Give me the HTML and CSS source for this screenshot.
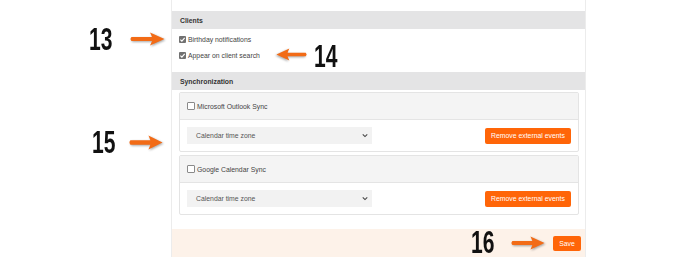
FILE: index.html
```html
<!DOCTYPE html>
<html>
<head>
<meta charset="utf-8">
<link rel="stylesheet" href="styles.css">
</head>
<body>
<div class="page">
  <div class="panel">
    <div class="section-head">Clients</div>
    <div class="options">
      <label class="opt"><span class="cb checked"><svg viewBox="0 0 8 8" width="7" height="7"><path d="M1.6 4.1 L3.3 5.8 L6.5 2.2" fill="none" stroke="#fff" stroke-width="1.3"/></svg></span>Birthday notifications</label>
      <label class="opt"><span class="cb checked"><svg viewBox="0 0 8 8" width="7" height="7"><path d="M1.6 4.1 L3.3 5.8 L6.5 2.2" fill="none" stroke="#fff" stroke-width="1.3"/></svg></span>Appear on client search</label>
    </div>
    <div class="section-head">Synchronization</div>
    <div class="cards">
      <div class="card">
        <div class="card-head"><span class="cb"></span>Microsoft Outlook Sync</div>
        <div class="card-body">
          <div class="select">Calendar time zone<svg class="chev" viewBox="0 0 8 6" width="6" height="5"><path d="M1 1.5 L4 4.5 L7 1.5" fill="none" stroke="#444" stroke-width="1.4"/></svg></div>
          <div class="btn">Remove external events</div>
        </div>
      </div>
      <div class="card">
        <div class="card-head"><span class="cb"></span>Google Calendar Sync</div>
        <div class="card-body">
          <div class="select">Calendar time zone<svg class="chev" viewBox="0 0 8 6" width="6" height="5"><path d="M1 1.5 L4 4.5 L7 1.5" fill="none" stroke="#444" stroke-width="1.4"/></svg></div>
          <div class="btn">Remove external events</div>
        </div>
      </div>
    </div>
    <div class="footer"><div class="btn save">Save</div></div>
  </div>

  <div class="num n13">13</div>
  <div class="num n14">14</div>
  <div class="num n15">15</div>
  <div class="num n16">16</div>

  <svg class="arrow a13" viewBox="0 0 36 14" preserveAspectRatio="none"><path d="M2.5 5 H23 Q22 2.5 21 0.5 L35.5 7 L21 13.5 Q22 11.5 23 9 H2.5 Q0.5 7 2.5 5 Z"/></svg>
  <svg class="arrow a14 left" viewBox="0 0 36 14" preserveAspectRatio="none"><path d="M2.5 5 H23 Q22 2.5 21 0.5 L35.5 7 L21 13.5 Q22 11.5 23 9 H2.5 Q0.5 7 2.5 5 Z"/></svg>
  <svg class="arrow a15" viewBox="0 0 36 14" preserveAspectRatio="none"><path d="M2.5 5 H23 Q22 2.5 21 0.5 L35.5 7 L21 13.5 Q22 11.5 23 9 H2.5 Q0.5 7 2.5 5 Z"/></svg>
  <svg class="arrow a16" viewBox="0 0 36 14" preserveAspectRatio="none"><path d="M2.5 5 H23 Q22 2.5 21 0.5 L35.5 7 L21 13.5 Q22 11.5 23 9 H2.5 Q0.5 7 2.5 5 Z"/></svg>
</div>
</body>
</html>
```

FILE: styles.css
```css
html, body {
  margin: 0;
  padding: 0;
  background: #fff;
}
body {
  font-family: "Liberation Sans", Arial, sans-serif;
  font-size: 6.85px;
  color: #333;
}
.page {
  position: relative;
  width: 688px;
  height: 263px;
  overflow: hidden;
}
.panel {
  margin-left: 171px;
  width: 415px;
  box-sizing: border-box;
  border-left: 1px solid #ececec;
  border-right: 1px solid #ececec;
  padding-top: 11px;
}
.section-head {
  height: 18px;
  background: #e4e4e5;
  padding-left: 8px;
  display: flex;
  align-items: center;
  font-weight: bold;
  color: #333;
}
.options {
  padding: 2px 0 9px 7px;
}
.opt {
  height: 16px;
  display: flex;
  align-items: center;
  color: #444;
}
.cb {
  width: 6px;
  height: 6px;
  border: 1px solid #8a8a8a;
  border-radius: 1px;
  background: #fff;
  margin-right: 2px;
  display: inline-flex;
  align-items: center;
  justify-content: center;
  flex: none;
  box-sizing: content-box;
}
.cb.checked {
  width: 7px;
  height: 7px;
  border: none;
  background: #717171;
}
.cb svg {
  display: block;
}
.cards {
  padding: 2px 6px 14px 7px;
}
.card {
  border: 1px solid #e4e4e4;
  border-radius: 2px;
  margin-bottom: 3px;
}
.card:last-child {
  margin-bottom: 0;
}
.card-head {
  height: 26px;
  background: #f4f4f4;
  border-bottom: 1px solid #e4e4e4;
  display: flex;
  align-items: center;
  padding-left: 7px;
  color: #444;
}
.card-body {
  height: 31px;
  box-sizing: border-box;
  padding: 0 7px;
  display: flex;
  align-items: center;
  justify-content: space-between;
}
.select {
  width: 185px;
  height: 17px;
  box-sizing: border-box;
  background: #f2f2f2;
  display: flex;
  align-items: center;
  justify-content: space-between;
  padding: 0 4px 0 9px;
  color: #555;
}
.chev {
  display: block;
}
.btn {
  height: 16px;
  background: #ff6508;
  color: #fff;
  border-radius: 2px;
  display: flex;
  align-items: center;
  justify-content: center;
  padding: 0 5px;
  width: 86px;
  box-sizing: border-box;
}
.footer {
  height: 28px;
  background: #fdf2e9;
  display: flex;
  align-items: center;
  justify-content: flex-end;
  padding-right: 4px;
}
.btn.save {
  width: 28px;
  height: 15px;
  padding: 0;
  margin-top: 1px;
}
.num {
  position: absolute;
  font-family: "Liberation Sans", Arial, sans-serif;
  font-weight: bold;
  font-size: 31px;
  line-height: 1;
  color: #111;
  transform: scaleX(0.68);
  transform-origin: left top;
}
.n13 { left: 89px; top: 24px; }
.n14 { left: 314px; top: 41px; }
.n15 { left: 92px; top: 127px; }
.n16 { left: 471px; top: 227px; }
.arrow {
  position: absolute;
  fill: #f26b16;
  filter: drop-shadow(1px 1px 0.8px rgba(0, 0, 0, 0.35));
}
.arrow.left {
  transform: scaleX(-1);
}
.a13 { left: 129px; top: 32px; width: 36px; height: 14px; }
.a14 { left: 276px; top: 48px; width: 32px; height: 13px; }
.a15 { left: 128px; top: 135px; width: 35px; height: 15px; }
.a16 { left: 510px; top: 236px; width: 35px; height: 14px; }
```
